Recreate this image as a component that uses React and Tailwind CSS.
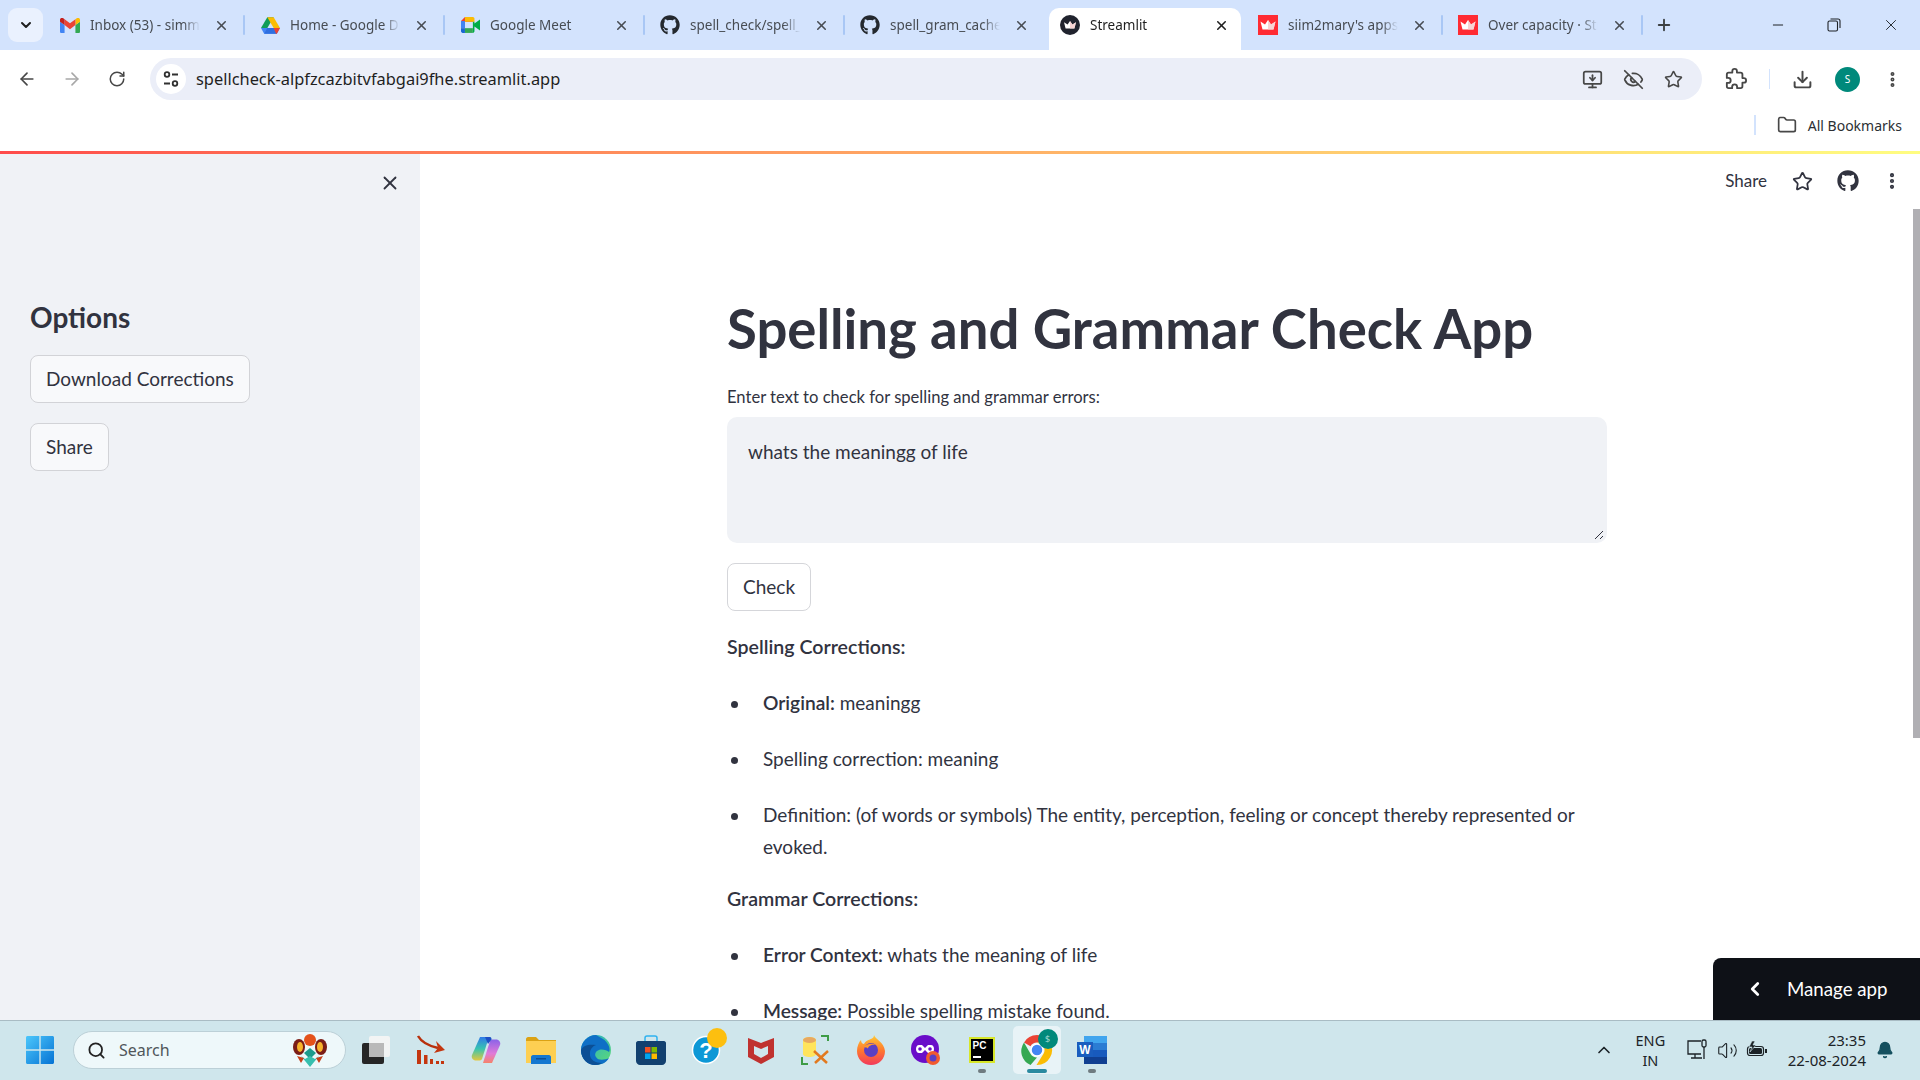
import {
  ArrowLeft,
  ArrowRight,
  RotateCw,
  X,
  ChevronDown,
  ChevronUp,
  ChevronLeft,
  Plus,
  Minus,
  Star,
  EyeOff,
  Download,
  MoreVertical,
  Folder,
  Search,
  MonitorDown,
  Volume2,
  Bell,
} from 'lucide-react'
import { FaGithub } from 'react-icons/fa'

function Gmail() {
  return (
    <svg viewBox="0 0 24 18" className="h-[15px] w-[20px]">
      <path d="M1.6 18H5.5V8.5L0 4.4V16.4C0 17.3.7 18 1.6 18Z" fill="#4285f4" />
      <path d="M18.5 18h3.9c.9 0 1.6-.7 1.6-1.6V4.4l-5.5 4.1Z" fill="#34a853" />
      <path d="M18.5 1.4v7.1L24 4.4V2.2C24 .2 21.700-.9 20.100.3Z" fill="#fbbc04" />
      <path d="M5.500 8.500V1.400L12 6.300l6.500-4.900v7.100L12 13.400Z" fill="#ea4335" />
      <path d="M0 2.200v2.200l5.500 4.100V1.400L3.900.3C2.300-.9 0 .2 0 2.200Z" fill="#c5221f" />
    </svg>
  )
}

function Drive() {
  return (
    <svg viewBox="0 0 24 21" className="h-[17px] w-[19px]">
      <path d="M8 0h8l-8 13.500H0Z" fill="#0f9d58" />
      <path d="M16 0l8 13.500h-8L8 0Z" fill="#fbbc04" />
      <path d="M0 13.500h24L20 21H4Z" fill="#4285f4" />
      <path d="M4 21l4-7.500h8l4 7.500Z" fill="#2f6fe0" />
      <path d="M16 13.500h8L20 21h-1Z" fill="#ea4335" />
    </svg>
  )
}

function Meet() {
  return (
    <svg viewBox="0 0 24 20" className="h-[16px] w-[19px]">
      <path d="M5 0h10v6H5v8H0V5Z" fill="#ea4335" />
      <path d="M0 5h5v9H0Z" fill="#4285f4" />
      <path d="M0 14h5v6H2c-1 0-2-1-2-2Z" fill="#1967d2" />
      <path d="M5 14h10v6H5Z" fill="#34a853" />
      <path d="M5 0h10c1 0 2 1 2 2v4h-2V6H5Z" fill="#fbbc04" />
      <path d="M15 6h2v2l7-5v14l-7-5v6c0 1-1 2-2 2Z" fill="#00ac47" />
    </svg>
  )
}

function Crown({ className }) {
  return (
    <svg viewBox="0 0 20 20" className={className}>
      <path d="M2.500 6.500l4.500 3L10 5l3 4.500 4.500-3-2 8h-11Z" fill="#fff" />
      <path d="M10 5l3 4.500 4.500-3-2 8H10Z" fill="#f5c9c9" opacity=".8" />
    </svg>
  )
}

function StreamlitDark() {
  return (
    <div className="flex h-5 w-5 items-center justify-center rounded-full bg-[#20232e]">
      <Crown className="h-4 w-4" />
    </div>
  )
}

function StreamlitRed() {
  return (
    <div className="flex h-5 w-5 items-center justify-center bg-[#ff2b33]">
      <Crown className="h-5 w-5" />
    </div>
  )
}

const tabs = [
  { title: 'Inbox (53) - simmi', icon: <Gmail /> },
  { title: 'Home - Google Drive', icon: <Drive /> },
  { title: 'Google Meet', icon: <Meet /> },
  { title: 'spell_check/spell_check', icon: <FaGithub className="h-5 w-5 text-[#24292f]" /> },
  { title: 'spell_gram_cache/app', icon: <FaGithub className="h-5 w-5 text-[#24292f]" /> },
  { title: 'Streamlit', icon: <StreamlitDark />, active: true },
  { title: "siim2mary's apps", icon: <StreamlitRed /> },
  { title: 'Over capacity · Streamlit', icon: <StreamlitRed /> },
]

function Tab({ title, icon, active, noDivider }) {
  return (
    <div
      className={`relative flex h-[42px] shrink-0 items-center pb-[8px] pl-[15px] ${
        active ? 'w-[198px] pr-[14px]' : 'w-[200px] pr-[16px]'
      }`}
    >
      {active && <div className="absolute inset-y-0 right-[2px] left-[4px] rounded-t-[10px] bg-white" />}
      <div className="relative flex w-5 shrink-0 items-center justify-center">{icon}</div>
      <div
        className={`relative ml-[10px] w-[110px] overflow-hidden text-[13.500px] whitespace-nowrap [mask-image:linear-gradient(to_right,black_85%,transparent)] ${
          active ? 'text-[#1f1f1f]' : 'text-[#474c53]'
        }`}
      >
        {title}
      </div>
      <X className={`relative ml-auto h-[15px] w-[15px] ${active ? 'text-[#1f1f1f]' : 'text-[#474c53]'}`} strokeWidth={2.500} />
      {!active && !noDivider && (
        <div className="absolute right-0 top-[7px] h-[20px] w-[2px] rounded bg-[#a9c7f5]" />
      )}
    </div>
  )
}

function TabStrip() {
  return (
    <div className="flex h-[50px] shrink-0 items-start bg-[#d3e3fd] pt-[8px]">
      <div className="ml-[8px] mr-[2px] flex h-[34px] w-[35px] shrink-0 items-center justify-center rounded-[9px] bg-[#eaf1fe]">
        <ChevronDown className="h-4 w-4 text-[#1f1f1f]" strokeWidth={3} />
      </div>
      {tabs.map((t, i) => (
        <Tab key={t.title} {...t} noDivider={i === 4} />
      ))}
      <div className="ml-[10.500px] flex h-[34px] w-5 items-center justify-center">
        <Plus className="h-[18px] w-[18px] text-[#3c4043]" strokeWidth={2.500} />
      </div>
      <div className="ml-auto flex h-[34px] items-center pr-[20px] text-[#1f2327]">
        <Minus className="h-4 w-4" strokeWidth={1.500} />
        <svg viewBox="0 0 14 14" className="ml-[41px] h-[14px] w-[14px]" fill="none" stroke="currentColor" strokeWidth="1.100">
          <rect x="1" y="3" width="9.500" height="10" rx="1.500" />
          <path d="M3.500 1h7.500c1 0 2 1 2 2v7" />
        </svg>
        <X className="ml-[41px] h-[18px] w-[18px]" strokeWidth={1.250} />
      </div>
    </div>
  )
}

function Toolbar() {
  return (
    <div className="flex h-[58px] shrink-0 items-center rounded-t-[8px] bg-white">
      <div className="flex w-[150px] shrink-0 items-center pl-[17px] text-[#474747]">
        <ArrowLeft className="h-5 w-5" strokeWidth={2} />
        <ArrowRight className="ml-[25px] h-5 w-5 text-[#a8a8a8]" strokeWidth={2} />
        <RotateCw className="ml-[26px] h-[18px] w-[18px]" strokeWidth={2} />
      </div>
      <div className="flex h-[42px] w-[1552px] shrink-0 items-center rounded-full bg-[#ebeef8] pl-[6px] pr-[19px]">
        <div className="flex h-[30px] w-[30px] items-center justify-center rounded-full bg-white">
          <svg viewBox="0 0 18 18" className="h-[18px] w-[18px]" fill="none" stroke="#303030" strokeWidth="1.800">
            <circle cx="5" cy="4.500" r="2.300" />
            <path d="M10 4.500h6M2 13.500h6" />
            <circle cx="13" cy="13.500" r="2.300" />
          </svg>
        </div>
        <span className="ml-[10px] text-[16.400px] text-[#1f1f1f]">spellcheck-alpfzcazbitvfabgai9fhe.streamlit.app</span>
        <div className="ml-auto flex items-center gap-[20px] text-[#474747]">
          <MonitorDown className="h-[21px] w-[21px]" strokeWidth={2} />
          <EyeOff className="h-[21px] w-[21px]" strokeWidth={2} />
          <Star className="h-[19px] w-[19px]" strokeWidth={2} />
        </div>
      </div>
      <div className="flex flex-1 items-center text-[#474747]">
        <svg viewBox="0 0 24 24" className="ml-[23px] h-[22px] w-[22px]" fill="none" stroke="currentColor" strokeWidth="2" strokeLinejoin="round">
          <path d="M20.500 11H19V7c0-1.100-.9-2-2-2h-4V3.500C13 2.100 11.900 1 10.500 1S8 2.100 8 3.500V5H4c-1.100 0-2 .9-2 2v3.800h1.500c1.500 0 2.700 1.200 2.700 2.700S5 16.200 3.500 16.200H2V20c0 1.100.9 2 2 2h3.800v-1.500c0-1.500 1.200-2.700 2.700-2.700s2.700 1.200 2.700 2.700V22H17c1.100 0 2-.9 2-2v-4h1.500c1.400 0 2.500-1.100 2.500-2.500S21.900 11 20.500 11Z" />
        </svg>
        <div className="ml-[22px] h-[20px] w-px bg-[#d3e3fd]" />
        <Download className="ml-[22px] h-[21px] w-[21px]" strokeWidth={2.250} />
        <div className="ml-[22px] flex h-[25px] w-[25px] items-center justify-center rounded-full bg-[#00897b] text-[10px] text-white">
          S
        </div>
        <MoreVertical className="ml-[23px] h-[19px] w-[19px]" strokeWidth={3} />
      </div>
    </div>
  )
}

function BookmarkBar() {
  return (
    <div className="flex h-[43px] shrink-0 items-center justify-end bg-white pb-[9px] pr-[18px]">
      <div className="h-[20px] w-[2px] bg-[#d3e3fd]" />
      <Folder className="ml-[21px] h-5 w-5 text-[#474747]" strokeWidth={2} />
      <span className="ml-[11px] text-[14px] text-[#2c2f33]">All Bookmarks</span>
    </div>
  )
}

function StButton({ children, className = '' }) {
  return (
    <button className={`h-12 rounded-lg border px-[15px] text-[19px] text-[#31333f] ${className}`}>
      {children}
    </button>
  )
}

function Sidebar() {
  return (
    <aside className="flex w-[420px] shrink-0 flex-col items-start bg-[#f0f2f6] px-[30px] pt-[18px]">
      <X className="ml-[349px] h-[22px] w-[22px] self-start text-[#31333f]" strokeWidth={2} />
      <h2 className="mt-[103px] text-[28px] leading-[40px] font-bold text-[#31333f]">Options</h2>
      <StButton className="mt-[18px] border-[#d2d3d7] bg-[#f8f9fb]">Download Corrections</StButton>
      <StButton className="mt-5 border-[#d2d3d7] bg-[#f8f9fb]">Share</StButton>
    </aside>
  )
}

function Bullet({ children, className = '' }) {
  return (
    <li className={`flex ${className}`}>
      <span className="mt-[14px] ml-[4px] h-[7px] w-[7px] shrink-0 rounded-full bg-[#31333f]" />
      <span className="ml-[25px]">{children}</span>
    </li>
  )
}

function Strong({ children }) {
  return <b className="text-[19.200px] font-semibold">{children}</b>
}

function MainArea() {
  return (
    <main className="relative flex-1 overflow-hidden bg-white">
      <div className="flex h-[54px] items-center justify-end pr-[18px] text-[#31333f]">
        <span className="mr-[-2px] text-[17px]">Share</span>
        <Star className="ml-[27px] h-[21px] w-[21px]" strokeWidth={2} />
        <FaGithub className="ml-[24px] h-[22px] w-[22px]" />
        <MoreVertical className="ml-[23px] h-[20px] w-[20px]" strokeWidth={3} />
      </div>
      <div className="ml-[307px] w-[880px] text-[19px] leading-[32px] text-[#31333f]">
        <h1 className="mt-[84px] text-[54.500px] leading-[72px] font-bold">Spelling and Grammar Check App</h1>
        <label className="mt-[21px] block text-[16.600px] leading-[24px]">
          Enter text to check for spelling and grammar errors:
        </label>
        <div className="relative mt-[8px] h-[126px] rounded-[10px] bg-[#f0f2f6] px-[21px] pt-[19px]">
          whats the meaningg of life
          <svg viewBox="0 0 10 10" className="absolute right-[3px] bottom-[3px] h-[10px] w-[10px]" stroke="#31333f" strokeWidth="1">
            <path d="M1 9l8-8M6 9l3-3" />
          </svg>
        </div>
        <StButton className="mt-[20px] block border-[#d5d6da] bg-white">Check</StButton>
        <p className="mt-[20px] text-[19.600px] font-semibold">Spelling Corrections:</p>
        <ul className="mt-[24px] flex flex-col gap-[24px]">
          <Bullet>
            <Strong>Original:</Strong> meaningg
          </Bullet>
          <Bullet>Spelling correction: meaning</Bullet>
          <Bullet>Definition: (of words or symbols) The entity, perception, feeling or concept thereby represented or evoked.</Bullet>
        </ul>
        <p className="mt-[20px] text-[19.600px] font-semibold">Grammar Corrections:</p>
        <ul className="mt-[24px] flex flex-col gap-[24px]">
          <Bullet>
            <Strong>Error Context:</Strong> whats the meaning of life
          </Bullet>
          <Bullet>
            <Strong>Message:</Strong> Possible spelling mistake found.
          </Bullet>
        </ul>
      </div>
      <div className="absolute top-[55px] right-0 h-[529px] w-[7px] bg-[#b0afb3]" />
      <div className="absolute right-0 bottom-0 flex h-[62px] w-[207px] items-center rounded-tl-lg bg-[#0e1117] pl-[31px] text-white">
        <ChevronLeft className="h-[22px] w-[22px]" strokeWidth={3} />
        <span className="ml-[21px] text-[18.700px]">Manage app</span>
      </div>
    </main>
  )
}

function WinLogo() {
  return (
    <svg viewBox="0 0 30 30" className="h-[30px] w-[30px]">
      <defs>
        <linearGradient id="win" x1="0" y1="0" x2="1" y2="1">
          <stop offset="0" stopColor="#4cc7fb" />
          <stop offset="1" stopColor="#0673d4" />
        </linearGradient>
      </defs>
      <path d="M1 2.500C1 1.700 1.700 1 2.500 1H14.300V14.300H1ZM15.700 1H27.500c.8 0 1.500.7 1.500 1.500V14.300H15.700ZM1 15.700H14.300V29H2.500C1.700 29 1 28.300 1 27.500ZM15.700 15.700H29V27.500c0 .8-.7 1.500-1.500 1.500H15.700Z" fill="url(#win)" />
    </svg>
  )
}

function Flower() {
  return (
    <svg viewBox="0 0 36 36" className="h-9 w-9">
      <circle cx="18" cy="8" r="6" fill="#e4521b" />
      <ellipse cx="7" cy="15" rx="6" ry="8" fill="#7b1d16" />
      <ellipse cx="29" cy="15" rx="6" ry="8" fill="#7b1d16" />
      <ellipse cx="8" cy="15" rx="3" ry="5" fill="#f7b32b" />
      <ellipse cx="28" cy="15" rx="3" ry="5" fill="#f7b32b" />
      <path d="M18 16l6 5-6 6-6-6Z" fill="#1c9b8c" />
      <path d="M9 24l9 11 9-11-4 3-5-3-5 3Z" fill="#39bfae" />
      <path d="M5 24l4 7 3-5ZM31 24l-4 7-3-5Z" fill="#c7401a" />
    </svg>
  )
}

function TaskView() {
  return (
    <svg viewBox="0 0 30 30" className="h-[30px] w-[30px]">
      <rect x="1" y="8" width="22" height="21" rx="2" fill="#262626" />
      <rect x="8" y="1" width="21" height="21" rx="2" fill="#f2f4f4" />
      <rect x="8" y="8" width="15" height="14" fill="#b9b9b9" />
    </svg>
  )
}

function RedChart() {
  return (
    <svg viewBox="0 0 30 30" className="h-[30px] w-[30px]" fill="#c4360f">
      <rect x="1" y="15" width="4" height="14" />
      <rect x="8" y="20" width="3.500" height="9" />
      <rect x="14" y="24" width="3" height="5" />
      <rect x="20" y="26" width="3" height="3" />
      <rect x="25" y="26" width="3" height="3" />
      <path d="M2 1c4 7 11 10 20 12" fill="none" stroke="#b8300c" strokeWidth="2.500" />
      <path d="M20 6l9 9-11 3 4-5Z" />
    </svg>
  )
}

function Copilot() {
  return (
    <svg viewBox="0 0 30 30" className="h-[30px] w-[30px]">
      <defs>
        <linearGradient id="copa" x1="0" y1="0" x2="0" y2="1">
          <stop offset="0" stopColor="#2f7ae8" />
          <stop offset=".5" stopColor="#37c4b0" />
          <stop offset="1" stopColor="#e3c83f" />
        </linearGradient>
        <linearGradient id="copb" x1="0" y1="0" x2="0" y2="1">
          <stop offset="0" stopColor="#8a63e8" />
          <stop offset=".6" stopColor="#e07ad8" />
          <stop offset="1" stopColor="#f5836a" />
        </linearGradient>
      </defs>
      <path d="M9 2h9L11 24c-.5 1-2 1.500-3 1.500H5C2 25.500 0 23 1 20Z" fill="url(#copa)" />
      <path d="M21 28h-9l7-22c.5-1 2-1.500 3-1.500h3c3 0 5 2.500 4 5.500Z" fill="url(#copb)" />
      <path d="M14 2h5c1 0 1.500 1 1.500 2.500L17 9Z" fill="#1d4fc4" />
    </svg>
  )
}

function Explorer() {
  return (
    <svg viewBox="0 0 30 30" className="h-[30px] w-[30px]">
      <path d="M0 4c0-1 1-2 2-2h8l3 3h17v4H0Z" fill="#dba214" />
      <path d="M0 6h30v22H0Z" fill="#fdcf52" />
      <path d="M5 29v-7c0-1 1-2 2-2h16c1 0 2 1 2 2v7Z" fill="#1477d0" />
      <rect x="10" y="23" width="10" height="1.500" fill="#0b4f96" />
    </svg>
  )
}

function Edge() {
  return (
    <svg viewBox="0 0 30 30" className="h-[30px] w-[30px]">
      <defs>
        <linearGradient id="edge" x1="0" y1="0" x2="1" y2="1">
          <stop offset="0" stopColor="#22a7d6" />
          <stop offset="1" stopColor="#5fdc71" />
        </linearGradient>
      </defs>
      <circle cx="15" cy="15" r="15" fill="url(#edge)" />
      <path d="M15 0C7 0 0 7 0 15c0 9 7 15 14 15 6 0 11-2 14-7-4 2-11 3-13-1-2-3 0-6 3-7 3-1 8 0 10 2 2-3-1-10-6-13Z" fill="#0f6fc6" />
      <path d="M0 15c0 9 7 15 14 15 3 0 5-1 7-2-6 0-13-3-12-10 0-4 3-7 6-8C8 9 2 10 0 15Z" fill="#0c4f95" />
    </svg>
  )
}

function Store() {
  return (
    <svg viewBox="0 0 30 30" className="h-[30px] w-[30px]">
      <path d="M9 6V3c0-1 1-2 2-2h8c1 0 2 1 2 2v3" fill="none" stroke="#2fb2ef" strokeWidth="1.500" />
      <path d="M0 8c0-1 1-2 2-2h26c1 0 2 1 2 2v18c0 2-2 4-4 4H4c-2 0-4-2-4-4Z" fill="#12406f" />
      <rect x="9" y="12" width="5.500" height="5.500" fill="#f25022" />
      <rect x="15.500" y="12" width="5.500" height="5.500" fill="#7fba00" />
      <rect x="9" y="18.500" width="5.500" height="5.500" fill="#00a4ef" />
      <rect x="15.500" y="18.500" width="5.500" height="5.500" fill="#ffb900" />
    </svg>
  )
}

function Help() {
  return (
    <div className="relative h-[30px] w-[30px]">
      <svg viewBox="0 0 30 30" className="h-[30px] w-[30px]">
        <circle cx="15" cy="15" r="13.500" fill="#0d98d6" stroke="#fff" strokeWidth="1.500" />
        <text x="15" y="23" textAnchor="middle" fontSize="22" fontWeight="700" fill="#fff" fontFamily="Liberation Sans, sans-serif">
          ?
        </text>
      </svg>
      <div className="absolute -top-[7px] -right-[6px] h-5 w-5 rounded-full bg-[#fdbf0f]" />
    </div>
  )
}

function McAfee() {
  return (
    <svg viewBox="0 0 30 30" className="h-[30px] w-[30px]">
      <path d="M2 3l13 5 13-5v19l-13 7-13-7Z M8 11v8l7 4 7-4v-8l-7 3Z" fill="#c0322f" fillRule="evenodd" />
    </svg>
  )
}

function DbTools() {
  return (
    <svg viewBox="0 0 30 30" className="h-[30px] w-[30px]" fill="none">
      <path d="M2 5c0-4 13-4 13 0v14c0 4-13 4-13 0Z" fill="#ffe45c" />
      <ellipse cx="8.500" cy="5" rx="6.500" ry="3" fill="#e7a962" />
      <path d="M20 1h7v5M1 22v7h6" stroke="#3d9c46" strokeWidth="2" />
      <path d="M13 16l13 12M27 16L14 28" stroke="#e2791f" strokeWidth="2.500" />
    </svg>
  )
}

function Firefox() {
  return (
    <svg viewBox="0 0 30 30" className="h-[30px] w-[30px]">
      <defs>
        <linearGradient id="ff" x1="0" y1="0" x2="0" y2="1">
          <stop offset="0" stopColor="#ffcc33" />
          <stop offset=".5" stopColor="#ff7a2e" />
          <stop offset="1" stopColor="#f23a5c" />
        </linearGradient>
      </defs>
      <path d="M18 0c1 4 10 7 11 16 0 8-6 14-14 14S1 24 1 16C1 11 3 7 5 5c0 3 2 4 3 4 2-4 5-4 7-5 2-1 3-2 3-4Z" fill="url(#ff)" />
      <circle cx="15" cy="15" r="7" fill="#5b3fc4" />
      <path d="M8 12c3-4 9-4 12-2-4-1-8 1-8 4 0-2-3-1-4-2Z" fill="#ff9a2e" />
    </svg>
  )
}

function Purple() {
  return (
    <div className="relative h-[30px] w-[30px]">
      <svg viewBox="0 0 30 30" className="h-[30px] w-[30px]">
        <circle cx="14" cy="14" r="14" fill="#6a0dc9" />
        <path d="M8 10h3l3 3 3-3h3c2 0 3 2 3 4s-1 4-3 4h-3l-3-3-3 3H8c-2 0-3-2-3-4s1-4 3-4Z" fill="#fff" />
        <circle cx="9" cy="14" r="1.800" fill="#6a0dc9" />
        <circle cx="19" cy="14" r="1.800" fill="#6a0dc9" />
        <circle cx="22" cy="23" r="7" fill="#f25a2e" />
        <circle cx="22" cy="23" r="3.500" fill="#5b3fc4" />
      </svg>
    </div>
  )
}

function PyCharm() {
  return (
    <div className="flex h-[26px] w-[26px] bg-[#d7e62a] p-[2px]">
      <div className="flex h-full w-full flex-col bg-black px-[2px] pt-[1px] font-['Liberation_Sans',sans-serif] text-[10px] leading-[11px] font-bold text-white">
        PC
        <span className="mt-[5px] h-[1.500px] w-[8px] bg-white" />
      </div>
    </div>
  )
}

function Chrome() {
  return (
    <div className="relative h-[32px] w-[32px]">
      <svg viewBox="0 0 32 32" className="h-full w-full">
        <path d="M16 1a15 15 0 0 1 13 7.500H16a7.500 7.500 0 0 0-6.500 3.750L3 8.500A15 15 0 0 1 16 1Z" fill="#ea4335" />
        <path d="M3 8.500l6.500 11.250A7.500 7.500 0 0 0 16 23.500L9.500 31A15 15 0 0 1 3 8.500Z" fill="#34a853" />
        <path d="M29 8.500A15 15 0 0 1 16 31h-.5L22.500 19.750A7.500 7.500 0 0 0 22.500 12.250L16 8.500Z" fill="#fbbc04" />
        <circle cx="16" cy="16" r="6" fill="#4285f4" stroke="#fff" strokeWidth="1.500" />
      </svg>
      <div className="absolute -top-[5px] -right-[5px] flex h-5 w-5 items-center justify-center rounded-full bg-[#00897b] text-[9px] text-[#9fd6cf]">
        $
      </div>
    </div>
  )
}

function Word() {
  return (
    <div className="relative h-[28px] w-[30px]">
      <svg viewBox="0 0 30 28" className="h-full w-full">
        <rect x="7" y="0" width="23" height="7" fill="#41a5ee" />
        <rect x="7" y="7" width="23" height="7" fill="#2b7cd3" />
        <rect x="7" y="14" width="23" height="7" fill="#185abd" />
        <rect x="7" y="21" width="23" height="7" fill="#103f91" />
        <rect x="0" y="6" width="16" height="15" fill="#1a5dbe" />
        <text x="8" y="18" textAnchor="middle" fontSize="12" fontWeight="700" fill="#fff" fontFamily="Liberation Sans, sans-serif">
          W
        </text>
      </svg>
    </div>
  )
}

function TaskIcon({ children, running, active }) {
  return (
    <div
      className={`relative flex h-[48px] w-[48px] shrink-0 items-center justify-center rounded-[5px] ${
        active ? 'bg-[#e8f3f7]' : ''
      }`}
    >
      {children}
      {running && (
        <div
          className={`absolute bottom-[1px] h-[4px] rounded-full ${
            active ? 'w-[20px] bg-[#2a8aa0]' : 'w-[8px] bg-[#6f7b80]'
          }`}
        />
      )}
    </div>
  )
}

const taskIcons = [
  { key: 'task', el: <TaskView /> },
  { key: 'red', el: <RedChart /> },
  { key: 'copilot', el: <Copilot /> },
  { key: 'files', el: <Explorer /> },
  { key: 'edge', el: <Edge /> },
  { key: 'store', el: <Store /> },
  { key: 'help', el: <Help /> },
  { key: 'mcafee', el: <McAfee /> },
  { key: 'db', el: <DbTools /> },
  { key: 'firefox', el: <Firefox /> },
  { key: 'purple', el: <Purple /> },
  { key: 'pycharm', el: <PyCharm />, running: true },
  { key: 'chrome', el: <Chrome />, running: true, active: true },
  { key: 'word', el: <Word />, running: true },
]

function Taskbar() {
  return (
    <footer className="z-10 flex h-[60px] shrink-0 items-center border-t border-[#a9bcc4] bg-[#cfe6ec] pb-[1px] pl-[25px] pr-[26px] text-[#1c2327]">
      <WinLogo />
      <div className="ml-[18px] flex h-[38px] w-[273px] items-center rounded-full border border-[#bcd0d7] bg-[#eef8fa] pl-[13px] pr-[17px]">
        <Search className="h-[19px] w-[19px] text-[#222]" strokeWidth={2.250} />
        <span className="ml-[13px] text-[16px] text-[#50565a]">Search</span>
        <div className="ml-auto">
          <Flower />
        </div>
      </div>
      <div className="ml-[5.500px] flex items-center gap-[7.100px]">
        {taskIcons.map((t) => (
          <TaskIcon key={t.key} running={t.running} active={t.active}>
            {t.el}
          </TaskIcon>
        ))}
      </div>
      <ChevronUp className="ml-auto h-[20px] w-[20px]" strokeWidth={2} />
      <div className="ml-[22px] flex flex-col items-center text-[14.500px] leading-[20px]">
        <span>ENG</span>
        <span>IN</span>
      </div>
      <svg viewBox="0 0 24 24" className="ml-[19.500px] h-[24px] w-[24px]" fill="none" stroke="currentColor" strokeWidth="1.300">
        <path d="M16 3H3v13h13M6 20h11M10 16v4" />
        <rect x="17" y="2" width="4" height="7" rx="1.500" />
        <path d="M19 9v12" />
      </svg>
      <Volume2 className="ml-[8px] h-[21px] w-[21px]" strokeWidth={1.250} />
      <svg viewBox="0 0 22 18" className="ml-[8px] h-[18px] w-[22px]">
        <rect x="1.500" y="5.500" width="16" height="9" rx="2.500" fill="none" stroke="#1c2327" strokeWidth="1.200" />
        <rect x="3" y="7" width="13" height="6" rx="1.500" fill="#1c2327" />
        <rect x="19" y="8" width="2" height="4" fill="#1c2327" />
        <path d="M6 0L3 6h3l-2 5 6-7H7l2-4Z" fill="#1c2327" stroke="#cfe6ec" strokeWidth=".6" />
      </svg>
      <div className="ml-[20px] flex flex-col items-end text-[15px] leading-[20px]">
        <span>23:35</span>
        <span>22-08-2024</span>
      </div>
      <Bell className="ml-[10px] h-[18px] w-[18px] fill-[#15505f] text-[#15505f]" strokeWidth={2} />
    </footer>
  )
}

export default function App() {
  return (
    <div className="flex h-screen w-screen flex-col overflow-hidden font-['Lato',sans-serif]">
      <div className="font-['Noto_Sans',sans-serif]">
        <TabStrip />
        <Toolbar />
        <BookmarkBar />
      </div>
      <div className="h-[3px] shrink-0 bg-linear-to-r from-[#ff4b4b] to-[#fffd80]" />
      <div className="flex min-h-0 flex-1">
        <Sidebar />
        <MainArea />
      </div>
      <div className="font-['Noto_Sans',sans-serif]">
        <Taskbar />
      </div>
    </div>
  )
}
